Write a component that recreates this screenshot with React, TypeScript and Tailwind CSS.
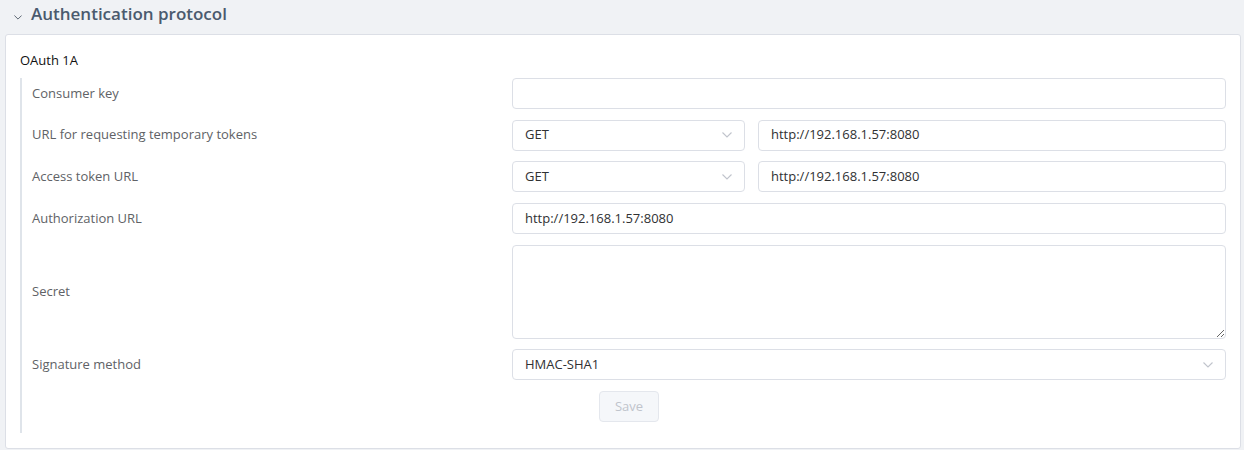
import React from 'react';

const font = { fontFamily: '"Open Sans", "Noto Sans", sans-serif' };

function Chevron({ className = '', w = 10, h = 6 }: { className?: string; w?: number; h?: number }) {
  return (
    <svg width={w} height={h} viewBox="0 0 10 6" className={className}>
      <path d="M0.5 0.5 L5 5 L9.5 0.5" fill="none" stroke="currentColor" strokeWidth="1.1" />
    </svg>
  );
}

function Select({ value }: { value: string }) {
  return (
    <div className="flex h-[31px] items-center justify-between rounded-[4px] border border-[#dcdfe6] bg-white pl-3 pr-[12px] text-[13px] text-[#303133]">
      <span>{value}</span>
      <Chevron className="text-[#c0c4cc]" />
    </div>
  );
}

function Input({ value = '' }: { value?: string }) {
  return (
    <div className="flex h-[31px] items-center rounded-[4px] border border-[#dcdfe6] bg-white px-3 text-[13px] text-[#303133]">
      {value}
    </div>
  );
}

function Row({ label, children }: { label: string; children: React.ReactNode }) {
  return (
    <div className="flex items-center">
      <div className="w-[480px] shrink-0 text-[13px] text-[#606266]">{label}</div>
      <div className="flex-1">{children}</div>
    </div>
  );
}

export default function App() {
  const url = 'http://192.168.1.57:8080';
  return (
    <div className="h-[450px] w-[1244px] overflow-hidden bg-[#f0f2f5]" style={font}>
      <div className="flex h-[34px] items-start pl-[14px] pt-[2px]">
        <Chevron w={8} h={5} className="mr-[9px] mt-[13px] text-[#4b5563]" />
        <span className="text-[17px] font-semibold leading-[24px] text-[#4a5a6e]">Authentication protocol</span>
      </div>
      <div className="ml-[5px] mr-[3px] rounded-[3px] border border-[#dcdfe6] bg-white pb-[15px] pl-[14px] pr-[14px] pt-[14px]">
        <div className="mb-[7px] text-[13px] leading-[22px] text-[#111]">OAuth 1A</div>
        <div className="flex flex-col gap-[10.7px] border-l-2 border-[#dfe4ea] pb-[11px] pl-[10px]">
          <Row label="Consumer key">
            <Input />
          </Row>
          <Row label="URL for requesting temporary tokens">
            <div className="grid grid-cols-[233px_1fr] gap-[13px]">
              <Select value="GET" />
              <Input value={url} />
            </div>
          </Row>
          <Row label="Access token URL">
            <div className="grid grid-cols-[233px_1fr] gap-[13px]">
              <Select value="GET" />
              <Input value={url} />
            </div>
          </Row>
          <Row label="Authorization URL">
            <Input value={url} />
          </Row>
          <Row label="Secret">
            <textarea
              readOnly
              className="block h-[94px] w-full resize-y rounded-[4px] border border-[#dcdfe6] bg-white px-3 py-1 text-[13px] outline-none"
            />
          </Row>
          <Row label="Signature method">
            <Select value="HMAC-SHA1" />
          </Row>
          <div className="pl-[567px]">
            <button
              disabled
              className="h-[31px] w-[60px] rounded-[4px] border border-[#e4e7ed] bg-[#f5f7fa] text-[13px] text-[#c0c4cc]"
            >
              Save
            </button>
          </div>
        </div>
      </div>
    </div>
  );
}
